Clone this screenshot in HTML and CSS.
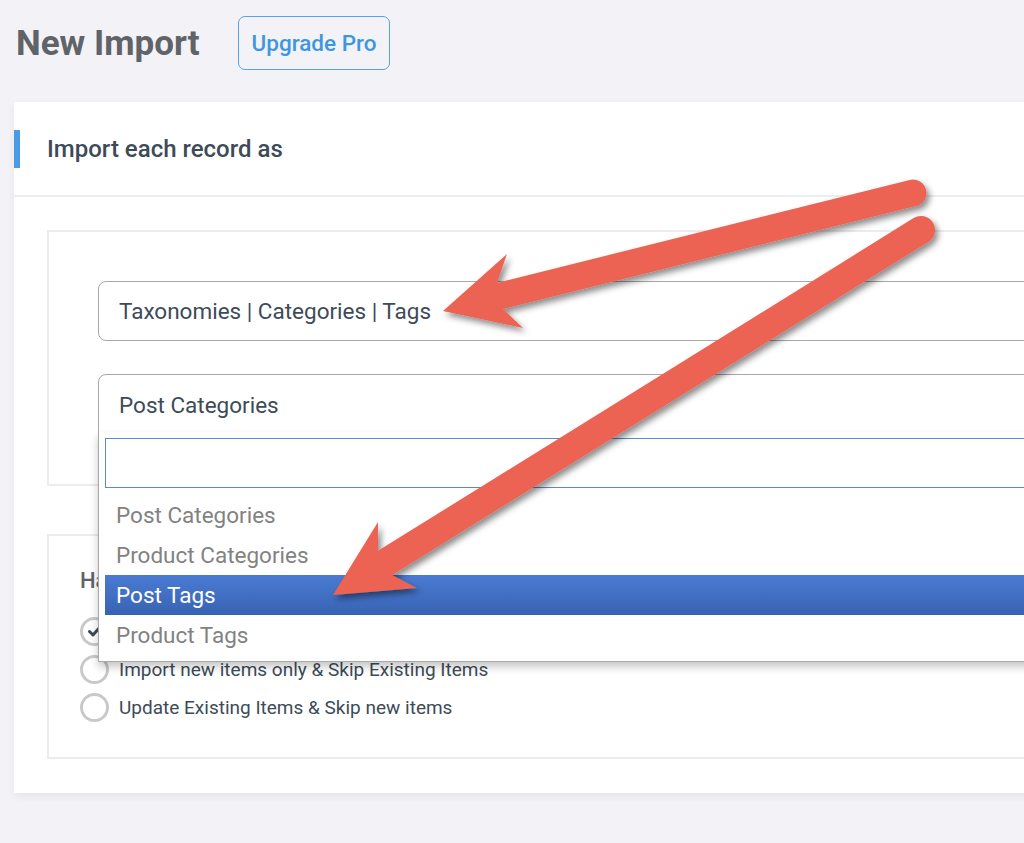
FILE: index.html
```html
<!DOCTYPE html>
<html lang="en">
  <head>
    <meta charset="utf-8">
    <title>New Import</title>
    <meta name="viewport" content="width=device-width, initial-scale=1">
    <link rel="stylesheet" href="styles.css">
  </head>
<body>
	<div class="page">
		<div class="top">
			<h1 class="title">New Import</h1>
			<button class="btn-pro">Upgrade Pro</button>
		</div>

		<div class="card">
			<div class="card-head">
				<h2>Import each record as</h2>
			</div>
			<div class="card-body">
				<!-- 记录类型 -->
				<div class="box box-type">
					<div class="select">Taxonomies | Categories | Tags</div>
					<div class="select open">
						<span>Post Categories</span>
						<div class="dropdown">
							<input class="search" type="text">
							<ul class="options">
								<li>Post Categories</li>
								<li>Product Categories</li>
								<li class="active">Post Tags</li>
								<li>Product Tags</li>
							</ul>
						</div>
					</div>
				</div>

				<!-- 重复处理 -->
				<div class="box box-dup">
					<h3>Handle Duplicate Records</h3>
					<label class="radio checked">
						<span class="circle">
							<svg width="14" height="12" viewBox="0 0 14 12"><path d="M1.5 6.5 L5 10 L12.5 1.5" fill="none" stroke="#3d4b58" stroke-width="3" stroke-linecap="round" stroke-linejoin="round"/></svg>
						</span>
						Import new items &amp; Update Existing Items
					</label>
					<label class="radio">
						<span class="circle"></span>
						Import new items only &amp; Skip Existing Items
					</label>
					<label class="radio">
						<span class="circle"></span>
						Update Existing Items &amp; Skip new items
					</label>
				</div>
			</div>
		</div>
	</div>

	<!-- 标注箭头 -->
	<svg class="arrows" width="1024" height="843" viewBox="0 0 1024 843">
		<defs>
			<filter id="shade" x="-10%" y="-10%" width="130%" height="130%">
				<feDropShadow dx="3" dy="4" stdDeviation="3" flood-color="#000" flood-opacity="0.45"/>
			</filter>
		</defs>
		<g filter="url(#shade)" fill="#ec6353">
			<line x1="500" y1="296" x2="913" y2="193" stroke="#ec6353" stroke-width="27" stroke-linecap="round"/>
			<polygon points="443,311 507,254 497,283 503,309 523,328"/>
		</g>
		<g filter="url(#shade)" fill="#ec6353">
			<line x1="385" y1="563" x2="921" y2="230" stroke="#ec6353" stroke-width="28" stroke-linecap="round"/>
			<polygon points="333,595 378,522 378,551 392,575 417,588"/>
		</g>
	</svg>
</body>
</html>
```

FILE: styles.css
```css
* {
    box-sizing: border-box;
}
body {
    margin: 0;
    background: #f2f2f7;
    font-family: Roboto, "Liberation Sans", sans-serif;
    overflow: hidden;
    height: 843px;
    position: relative;
}
.page {
    padding: 16px 0 0 14px;
}

.top {
    display: flex;
    align-items: center;
    gap: 38px;
    padding-left: 2px;
    height: 54px;
}
.title {
    margin: 0;
    font-size: 35px;
    font-weight: 700;
    color: #606368;
}
.btn-pro {
    height: 54px;
    padding: 0 13px;
    border: 1.5px solid #58a3e6;
    border-radius: 7px;
    background: transparent;
    color: #3f96e0;
    font-family: Roboto, sans-serif;
    font-size: 22.5px;
    font-weight: 500;
}

.card {
    margin-top: 32px;
    width: 1150px;
    background: #fff;
    box-shadow: 0 3px 8px rgba(0, 0, 0, .06);
    padding-bottom: 34px;
}
.card-head {
    height: 95px;
    border-bottom: 2px solid #eeeef2;
    display: flex;
    align-items: center;
}
.card-head h2 {
    margin: 0;
    border-left: 6px solid #4a9be6;
    padding-left: 27px;
    line-height: 38px;
    font-size: 24px;
    font-weight: 500;
    color: #3d4b58;
}
.card-body {
    padding: 33px 0 0 33px;
}

.box {
    border: 2px solid #ececec;
}
.box-type {
    padding: 49px 0 50px 49px;
}
.box-dup {
    margin-top: 48px;
    padding: 32px 0 31px 31px;
}

.select {
    height: 60px;
    border: 1px solid #a8a8a8;
    border-radius: 8px;
    padding-left: 20px;
    display: flex;
    align-items: center;
    font-size: 22.5px;
    color: #3d4b58;
}
.select + .select {
    margin-top: 33px;
}
.select.open {
    position: relative;
    align-items: flex-start;
    padding-top: 17px;
    border-radius: 8px 8px 0 0;
}
.dropdown {
    position: absolute;
    z-index: 10;
    top: 57px;
    left: -1px;
    right: -1px;
    background: #fff;
    border: 1px solid #a8a8a8;
    border-top: none;
    padding: 6px 0 6px 6px;
    box-shadow: 0 5px 8px rgba(0, 0, 0, .22);
}
.search {
    display: block;
    width: 100%;
    height: 50px;
    border: 1px solid #5b89cf;
    outline: none;
    background: #fff;
}
.options {
    list-style: none;
    margin: 7px 0 0;
    padding: 0;
}
.options li {
    height: 40px;
    line-height: 40px;
    padding-left: 11px;
    font-size: 22.5px;
    color: #828282;
}
.options li.active {
    background: linear-gradient(#4a7bd3, #3863b3);
    color: #fff;
}

.box-dup h3 {
    margin: 0 0 18px;
    font-size: 22px;
    font-weight: 500;
    color: #5f6368;
    line-height: 26px;
}
.radio {
    display: flex;
    align-items: center;
    height: 38px;
    font-size: 19px;
    color: #3d4b58;
}
.circle {
    width: 29px;
    height: 29px;
    margin-right: 10px;
    border: 3px solid #c9c9c9;
    border-radius: 50%;
    background: #fff;
    display: flex;
    align-items: center;
    justify-content: center;
}

.arrows {
    position: absolute;
    top: 0;
    left: 0;
    z-index: 20;
    pointer-events: none;
}
```
